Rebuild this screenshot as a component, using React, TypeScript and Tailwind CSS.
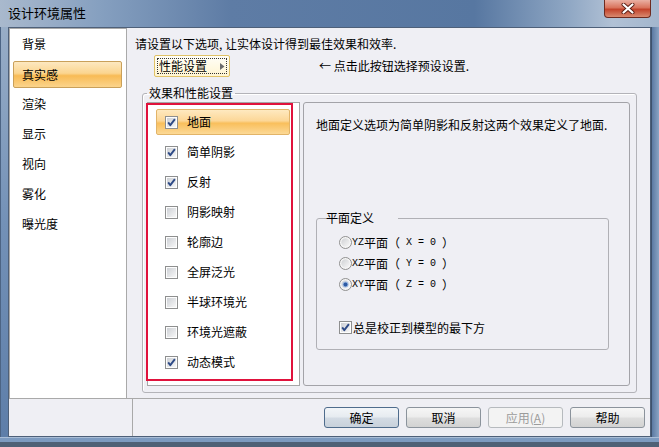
import React from "react";

const FONT = "font-['Noto_Sans_CJK_SC',sans-serif]";

const navItems = ["背景", "真实感", "渲染", "显示", "视向", "雾化", "曝光度"];

const effects: { label: string; checked: boolean }[] = [
  { label: "地面", checked: true },
  { label: "简单阴影", checked: true },
  { label: "反射", checked: true },
  { label: "阴影映射", checked: false },
  { label: "轮廓边", checked: false },
  { label: "全屏泛光", checked: false },
  { label: "半球环境光", checked: false },
  { label: "环境光遮蔽", checked: false },
  { label: "动态模式", checked: true },
];

const planes = [
  { axis: "YZ", eq: "X", selected: false },
  { axis: "XZ", eq: "Y", selected: false },
  { axis: "XY", eq: "Z", selected: true },
];

const CheckBox: React.FC<{ checked: boolean }> = ({ checked }) => (
  <svg width="13" height="13" viewBox="0 0 13 13" className="shrink-0">
    <defs>
      <linearGradient id="cbFill" x1="0" y1="0" x2="1" y2="1">
        <stop offset="0" stopColor="#cdd0d5" />
        <stop offset="1" stopColor="#f7f7f7" />
      </linearGradient>
    </defs>
    <rect x="0.5" y="0.5" width="12" height="12" fill="#fdfdfd" stroke="#8e8f8f" />
    <rect x="2" y="2" width="9" height="9" fill="url(#cbFill)" />
    {checked && (
      <path d="M3.2 6.4 L5.3 9.2 L9.9 3.2" fill="none" stroke="#2e4a86" strokeWidth="1.9" strokeLinejoin="round" />
    )}
  </svg>
);

const Radio: React.FC<{ selected: boolean }> = ({ selected }) => (
  <svg width="13" height="13" viewBox="0 0 13 13" className="shrink-0">
    <defs>
      <linearGradient id="rbFill" x1="0" y1="0" x2="1" y2="1">
        <stop offset="0" stopColor="#cfd1d4" />
        <stop offset="1" stopColor="#f8f8f8" />
      </linearGradient>
    </defs>
    <circle cx="6.5" cy="6.5" r="6" fill="#f6f6f6" stroke="#8f8f8f" />
    <circle cx="6.5" cy="6.5" r="4.2" fill="url(#rbFill)" />
    {selected && (
      <>
        <circle cx="6.5" cy="6.5" r="3" fill="#9cb8e0" />
        <circle cx="6.5" cy="6.5" r="2" fill="#2d5aa3" />
      </>
    )}
  </svg>
);

const FooterButton: React.FC<{ kind?: "default" | "normal" | "disabled"; children: React.ReactNode }> = ({
  kind = "normal",
  children,
}) => {
  const styles = {
    default:
      "border-[#4f6c8c] bg-[linear-gradient(to_bottom,#f2f5f8_0%,#e6ebf0_48%,#d3dbe4_52%,#c8d1db_100%)] text-black",
    normal:
      "border-[#8b939c] bg-[linear-gradient(to_bottom,#f6f6f6_0%,#ececec_48%,#dedede_52%,#d2d2d2_100%)] text-black",
    disabled: "border-[#b6babe] bg-[#f3f3f3] text-[#9c9c9c]",
  }[kind];
  return (
    <div className={`h-[21px] w-[75px] rounded-[3px] border flex items-center justify-center text-[12px] leading-[16px] ${styles}`}>
      {children}
    </div>
  );
};

export default function App() {
  return (
    <div
      className={`w-[659px] h-[447px] flex flex-col overflow-hidden bg-[linear-gradient(to_bottom,#9db1c9,#7391b7_50%,#5d7da8)] ${FONT}`}
    >
      {/* title bar */}
      <div className="h-[27px] flex shrink-0 bg-[linear-gradient(to_right,#a9b9cd_0%,#86a0c0_15%,#5e7ca5_35%,#5777a1_72%,#8ea6c3_86%,#b1c1d5_93%,#a3b6cd_100%)]">
        <div className="pl-[8px] pt-[4px] text-[13px] leading-[18px] text-black">设计环境属性</div>
        <div className="ml-auto mr-[8px] w-[47px] h-[18px] rounded-b-[4px] border border-t-0 border-[#6e2b20] bg-[linear-gradient(to_bottom,#eab0a3_0%,#d9735c_45%,#c3432b_55%,#d98a70_100%)] flex items-center justify-center">
          <svg width="14" height="11" viewBox="0 0 14 11">
            <path d="M2.5 1.5 L11.5 9.5 M11.5 1.5 L2.5 9.5" stroke="#5a1e14" strokeWidth="4" strokeLinecap="round" />
            <path d="M2.5 1.5 L11.5 9.5 M11.5 1.5 L2.5 9.5" stroke="#ffffff" strokeWidth="2.2" strokeLinecap="round" />
          </svg>
        </div>
      </div>

      {/* frame + client */}
      <div className="h-[410px] flex shrink-0">
        <div className="w-[8px] border-l border-[#4c6484]" />
        <div className="w-[643px] h-full border border-[#4e6079] bg-[#efeff4] flex flex-col text-[12px] leading-[16px] text-black">
          <div className="h-[370px] flex">
            {/* navigation */}
            <div className="w-[118px] h-full bg-white border border-b-0 border-[#a9a9a9] pl-[3px] pr-[4px]">
              {navItems.map((n) => (
                <div key={n} className="h-[30px] flex items-center">
                  {n === "真实感" ? (
                    <div className="w-full h-[27px] mt-[1px] rounded-[2px] border border-[#c9a05a] bg-[linear-gradient(to_bottom,#fde8c0_0%,#fbd58f_45%,#f8bb55_55%,#fbd48c_100%)] flex items-center pl-[8px]">
                      {n}
                    </div>
                  ) : (
                    <div className="pl-[9px]">{n}</div>
                  )}
                </div>
              ))}
            </div>

            {/* content */}
            <div className="flex-1 flex flex-col">
              <div className="pl-[8px] pt-[8px]">请设置以下选项, 让实体设计得到最佳效果和效率.</div>
              <div className="flex items-center mt-[3px] pl-[27px] h-[22px]">
                <div className="w-[76px] h-[22px] rounded-[2px] border border-[#e0c266] bg-[linear-gradient(to_bottom,#fffef8,#fff5d2)] p-[2px]">
                  <div className="h-full border border-dotted border-[#333] flex items-center pl-[1px]">
                    <span>性能设置</span>
                    <svg width="5" height="7" viewBox="0 0 5 7" className="ml-[13px]">
                      <path d="M0 0 L4.5 3.5 L0 7 Z" fill="#6d6d6d" />
                    </svg>
                  </div>
                </div>
                <div className="ml-[89px]">← 点击此按钮选择预设设置.</div>
              </div>

              <fieldset className="mt-[8px] ml-[15px] mr-[13px] h-[308px] border border-[#b3b3b8] rounded-[3px] pb-[6px] shadow-[inset_1px_1px_0_#ffffff]">
                <legend className="ml-[4px] px-[2px]">效果和性能设置</legend>
                <div className="relative flex h-[284px] mt-[1px]">
                  <div className="ml-[4px] w-[153px] h-full bg-white border border-[#a6a6a6] pt-[4px] pl-[8px] pr-[9px]">
                    {effects.map((e, i) => (
                      <div key={e.label} className="h-[30px] py-[2px]">
                        <div
                          className={`h-full flex items-center pl-[8px] gap-[9px] rounded-[2px] border ${
                            i === 0
                              ? "border-[#e2b468] bg-[linear-gradient(to_bottom,#fee9c0_0%,#fcd797_45%,#f9bf5c_55%,#fcd996_100%)]"
                              : "border-transparent"
                          }`}
                        >
                          <CheckBox checked={e.checked} />
                          <span>{e.label}</span>
                        </div>
                      </div>
                    ))}
                  </div>

                  <div className="ml-[3px] w-[327px] h-full rounded-[3px] border border-[#a3a3a8] pl-[12px] pt-[14px]">
                    <div>地面定义选项为简单阴影和反射这两个效果定义了地面.</div>
                    <fieldset className="mt-[77px] w-[293px] h-[140px] border border-[#b0b0b5] rounded-[3px] pl-[22px]">
                      <legend className="ml-[7px] px-[2px] -translate-x-[22px]">平面定义</legend>
                      <div className="pt-[6px]">
                        {planes.map((p) => (
                          <div key={p.axis} className="h-[21px] flex items-center">
                            <Radio selected={p.selected} />
                            <span className="font-['Liberation_Mono',monospace] text-[10px]">{p.axis}</span>
                            <span>平面（</span>
                            <span className="font-['Liberation_Mono',monospace] text-[10px] whitespace-pre">{` ${p.eq} = 0 `}</span>
                            <span>）</span>
                          </div>
                        ))}
                        <div className="h-[21px] mt-[22px] flex items-center">
                          <CheckBox checked />
                          <span className="ml-[1px]">总是校正到模型的最下方</span>
                        </div>
                      </div>
                    </fieldset>
                  </div>

                  {/* red annotation frame */}
                  <div className="absolute left-[3px] top-[1px] w-[147px] h-[278px] border-2 border-[#e0123c] pointer-events-none" />
                </div>
              </fieldset>
            </div>
          </div>

          {/* footer */}
          <div className="flex-1 flex border-t border-[#a9a9a9]">
            <div className="w-[124px] border-r border-[#a9a9a9]" />
            <div className="flex-1 flex items-center justify-end gap-[7px] pr-[5px]">
              <FooterButton kind="default">确定</FooterButton>
              <FooterButton>取消</FooterButton>
              <FooterButton kind="disabled">
                应用(<span className="underline">A</span>)
              </FooterButton>
              <FooterButton>帮助</FooterButton>
            </div>
          </div>
        </div>
        <div className="flex-1 border-l border-[#3e526d] bg-[linear-gradient(to_right,#5c7aa3,#8aa4c4)]" />
      </div>

      {/* bottom frame */}
      <div className="h-[5px] shrink-0 bg-[#7d9bc0] border-t border-[#a9bdd6]" />
      <div className="flex-1 bg-[#4f6176]" />
    </div>
  );
}
